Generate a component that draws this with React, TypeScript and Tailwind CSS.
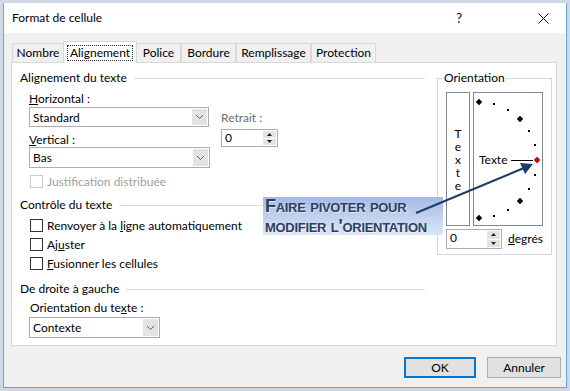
import React from "react";

function Chevron() {
  return (
    <svg width="9" height="6" viewBox="0 0 9 6" aria-hidden="true">
      <path d="M1 1 L4.5 4.5 L8 1" fill="none" stroke="#606060" strokeWidth="1" />
    </svg>
  );
}

function Select({ value, className }: { value: string; className: string }) {
  return (
    <div className={`flex border border-[#abadb3] bg-white ${className}`}>
      <span className="flex-1 pl-[3px] leading-[19px]">{value}</span>
      <span className="m-px flex w-[15px] items-center justify-center bg-[#e3e3e3]">
        <Chevron />
      </span>
    </div>
  );
}

function Spinner({ value, className }: { value: string; className: string }) {
  return (
    <div className={`flex border border-[#abadb3] bg-white ${className}`}>
      <span className="flex-1 pl-[3px] leading-[16px]">{value}</span>
      <span className="m-px flex w-[13px] flex-col gap-px">
        <span className="flex flex-1 items-center justify-center bg-[#e3e3e3]">
          <svg width="5" height="3" viewBox="0 0 5 3"><path d="M0 3 L2.5 0 L5 3Z" fill="#222" /></svg>
        </span>
        <span className="flex flex-1 items-center justify-center bg-[#e3e3e3]">
          <svg width="5" height="3" viewBox="0 0 5 3"><path d="M0 0 L2.5 3 L5 0Z" fill="#222" /></svg>
        </span>
      </span>
    </div>
  );
}

function Heading({ children }: { children: React.ReactNode }) {
  return (
    <div className="flex h-[16px] items-center">
      <span className="leading-[16px]">{children}</span>
      <span className="ml-[7px] h-px flex-1 bg-[#dcdcdc]" />
    </div>
  );
}

function Check({ children, disabled }: { children: React.ReactNode; disabled?: boolean }) {
  return (
    <div className="flex h-[19px] items-center pl-[10px]">
      <span
        className={`h-[13px] w-[13px] border bg-white ${disabled ? "border-[#cccccc]" : "border-[#333333]"}`}
      />
      <span className={`ml-[4px] leading-[16px] ${disabled ? "text-[#a0a0a0]" : ""}`}>{children}</span>
    </div>
  );
}

function Dial() {
  const cx = 5;
  const cy = 67;
  const r = 58;
  const pts = [90, 75, 60, 45, 30, 15, 0, -15, -30, -45, -60, -75, -90].map((a) => {
    const t = (a * Math.PI) / 180;
    return { a, x: cx + r * Math.cos(t), y: cy - r * Math.sin(t) };
  });
  return (
    <div className="relative h-[134px] w-[70px] border border-[#828790]">
      <svg className="absolute inset-0" width="68" height="132" viewBox="0 0 68 132">
        {pts.map((p) =>
          p.a % 45 === 0 ? (
            <polygon
              key={p.a}
              points={`${p.x},${p.y - 3} ${p.x + 3},${p.y} ${p.x},${p.y + 3} ${p.x - 3},${p.y}`}
              fill={p.a === 0 ? "#e00000" : "#000"}
              stroke={p.a === 0 ? "#800000" : "#000"}
              strokeWidth="0.5"
            />
          ) : (
            <rect key={p.a} x={Math.round(p.x) - 1} y={Math.round(p.y) - 1} width="2" height="2" fill="#000" />
          )
        )}
        <line x1="37" y1="67.5" x2="59" y2="67.5" stroke="#000" strokeWidth="1" />
      </svg>
      <span className="absolute left-[5px] top-[59px] leading-[16px]">Texte</span>
    </div>
  );
}

export default function App() {
  const tabs = ["Nombre", "Alignement", "Police", "Bordure", "Remplissage", "Protection"];
  const widths = ["w-[52px]", "w-[74px]", "w-[45px]", "w-[55px]", "w-[75px]", "w-[65px]"];
  return (
    <div className="relative h-[391px] w-[570px] overflow-hidden bg-[#cfd8e4] pl-[3px] pt-[3px] font-['Segoe_UI','Lato',sans-serif] text-[12px] text-black">
      <div className="flex h-[385px] w-[564px] flex-col border border-t-0 border-[#5aa9e6] bg-[#f0f0f0]">
        {/* Title bar */}
        <div className="flex h-[30px] items-center bg-white pl-[8px] pr-[17px]">
          <span className="flex-1 leading-[16px]">Format de cellule</span>
          <span className="mr-[76px] text-[13px] leading-[16px]">?</span>
          <svg width="11" height="11" viewBox="0 0 11 11" aria-hidden="true">
            <path d="M0.5 0.5 L10.5 10.5 M10.5 0.5 L0.5 10.5" stroke="#111" strokeWidth="1" />
          </svg>
        </div>

        {/* Body */}
        <div className="pl-[7px] pr-[9px] pt-[8px]">
          <div className="flex h-[21px] items-end pl-px">
            {tabs.map((t, i) =>
              i === 1 ? (
                <div
                  key={t}
                  className={`${widths[i]} relative z-10 -mb-px -ml-px flex h-[22px] items-center justify-center border border-b-0 border-[#d9d9d9] bg-white`}
                >
                  <span className="border border-dotted border-[#333] px-[2px] leading-[14px]">{t}</span>
                </div>
              ) : (
                <div
                  key={t}
                  className={`${widths[i]} ${i === 2 ? "-ml-px" : ""} flex h-[19px] items-center justify-center border border-b-0 border-[#d9d9d9] bg-[#f0f0f0] leading-[16px]`}
                >
                  {t}
                </div>
              )
            )}
          </div>

          <div className="flex h-[284px] border border-[#d9d9d9] bg-white">
            {/* Left column */}
            <div className="w-[413px] pl-[8px] pt-[7px]">
              <Heading>Alignement du texte</Heading>
              <div className="mt-[5px] h-[16px] pl-[9px] leading-[16px]">
                <span className="underline">H</span>orizontal :
              </div>
              <div className="flex pl-[9px]">
                <div className="w-[180px]">
                  <Select value="Standard" className="h-[20px] w-[180px]" />
                  <div className="mt-[5px] h-[15px] leading-[15px]">
                    <span className="underline">V</span>ertical :
                  </div>
                  <Select value="Bas" className="h-[21px] w-[181px]" />
                </div>
                <div className="ml-[12px]">
                  <div className="mt-[3px] h-[16px] leading-[16px] text-[#6d6d6d]">Retrait :</div>
                  <Spinner value="0" className="mt-[3px] h-[18px] w-[57px]" />
                </div>
              </div>
              <div className="mt-[4px]">
                <Check disabled>Justification distribuée</Check>
              </div>
              <div className="mt-[6px]">
                <Heading>Contrôle du texte</Heading>
              </div>
              <div className="mt-[3px]">
                <Check>
                  Renvoyer à la <span className="underline">l</span>igne automatiquement
                </Check>
                <Check>
                  Aj<span className="underline">u</span>ster
                </Check>
                <Check>
                  <span className="underline">F</span>usionner les cellules
                </Check>
              </div>
              <div className="mt-[8px]">
                <Heading>De droite à gauche</Heading>
              </div>
              <div className="mt-[3px] h-[16px] pl-[10px] leading-[16px]">
                Orientation du te<span className="underline">x</span>te :
              </div>
              <div className="mt-[1px] pl-[9px]">
                <Select value="Contexte" className="h-[21px] w-[131px]" />
              </div>
            </div>

            {/* Orientation */}
            <div className="relative ml-[12px] mt-[15px] h-[177px] w-[115px] border border-[#d5d5d5]">
              <span className="absolute -top-[9px] left-[5px] bg-white px-px leading-[16px]">Orientation</span>
              <div className="flex pl-[8px] pt-[13px]">
                <div className="flex h-[134px] w-[24px] flex-col items-center justify-center border border-[#828790]">
                  <span className="h-[13px] leading-[13px]">T</span>
                  <span className="h-[13px] leading-[13px]">e</span>
                  <span className="h-[13px] leading-[13px]">x</span>
                  <span className="h-[13px] leading-[13px]">t</span>
                  <span className="h-[13px] leading-[13px]">e</span>
                </div>
                <div className="ml-[3px]">
                  <Dial />
                </div>
              </div>
              <div className="mt-[3px] flex items-center pl-[8px]">
                <Spinner value="0" className="h-[20px] w-[56px]" />
                <span className="ml-[6px] leading-[16px]">
                  <span className="underline">d</span>egrés
                </span>
              </div>
            </div>
          </div>
        </div>

        {/* Buttons */}
        <div className="flex justify-end gap-[11px] pr-[5px] pt-[11px]">
          <button className="h-[21px] w-[72px] border-2 border-[#0078d7] bg-[#e1e1e1] leading-[16px]">OK</button>
          <button className="h-[21px] w-[74px] border border-[#adadad] bg-[#e1e1e1] leading-[16px]">Annuler</button>
        </div>
      </div>

      {/* Callout */}
      <div className="absolute left-[263px] top-[197px] flex h-[38px] w-[180px] flex-col justify-center bg-gradient-to-b from-[#a4bae6] to-[#dde6f6] pl-[2px] font-['Liberation_Sans',sans-serif] text-[18px] font-bold leading-[20px] tracking-[-0.3px] text-[#2d3f60] [font-variant:small-caps] [text-shadow:1px_1px_1px_rgba(255,255,255,0.6)]">
        <span>Faire pivoter pour</span>
        <span>modifier l'orientation</span>
      </div>
      <svg className="absolute left-0 top-0" width="570" height="391" viewBox="0 0 570 391" aria-hidden="true">
        <line x1="416" y1="213" x2="524" y2="168" stroke="#1f3a68" strokeWidth="2" />
        <polygon points="533,164 520,163 525,174" fill="#1f3a68" />
      </svg>
    </div>
  );
}
